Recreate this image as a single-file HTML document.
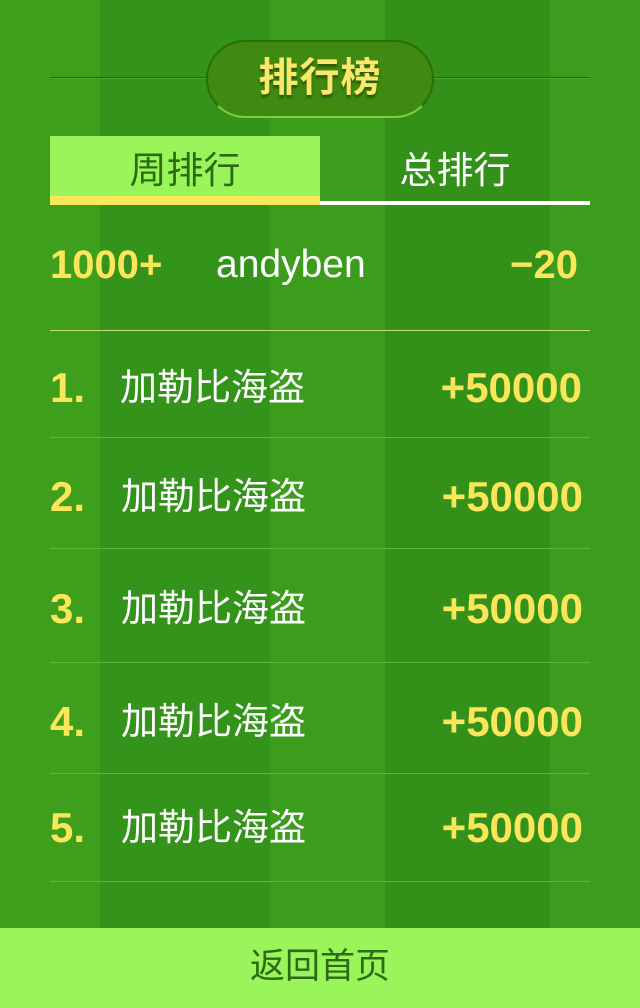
<!DOCTYPE html>
<html><head><meta charset="utf-8"><style>
*{margin:0;padding:0;box-sizing:border-box}
body{width:640px;height:1008px;position:relative;overflow:hidden;font-family:"Liberation Sans","Noto Sans CJK SC",sans-serif;
background:linear-gradient(90deg,#3d9f1c 0,#3d9f1c 100px,#34931a 100px,#34931a 270px,#3c9d1d 270px,#3c9d1d 385px,#33911a 385px,#33911a 550px,#3c9c1d 550px,#3c9c1d 640px);}
.abs{position:absolute}
.hl{top:77px;height:2px;background:#1e6a0c;border-bottom:1px solid #4faa2a}
.pill{left:206px;top:40px;width:228px;height:78px;border-radius:39px;background:#3f8a10;border:2px solid #2c6d0a;border-bottom-color:#7fcf3a;text-align:center;line-height:72px;font-size:40px;font-weight:bold;color:#fbe86a;text-shadow:0 3px 2px #285a08;letter-spacing:1px}
.tab{top:136px;height:64px;width:270px;text-align:center;font-size:37px;line-height:70px}
.r{height:60px;line-height:60px;white-space:nowrap}
.y{color:#fbe55a;font-weight:bold;font-size:42px}
.w{color:#fff;font-size:37px}
.div{left:50px;width:540px;height:1px;background:#5cb63a}
</style></head><body>
<div class="abs hl" style="left:50px;width:160px"></div>
<div class="abs hl" style="left:430px;width:160px"></div>
<div class="abs pill">排行榜</div>
<div class="abs tab" style="left:50px;background:#99f55a;color:#2c6a14">周排行</div>
<div class="abs" style="left:50px;top:196px;width:270px;height:9px;background:#fae85a"></div>
<div class="abs tab" style="left:320px;color:#fff">总排行</div>
<div class="abs" style="left:320px;top:201px;width:270px;height:4px;background:#fff"></div>

<div class="abs r y" style="left:50px;top:235px;font-size:40px">1000+</div>
<div class="abs r w" style="left:216px;top:235px;font-size:39px">andyben</div>
<div class="abs r y" style="right:62px;top:235px;font-size:40px">−20</div>
<div class="abs div" style="top:330px;background:#c8e070"></div>

<div class="abs r y" style="left:50px;top:358px">1.</div><div class="abs r w" style="left:120px;top:358px">加勒比海盗</div><div class="abs r y" style="right:58px;top:358px">+50000</div>
<div class="abs div" style="top:437px"></div>
<div class="abs r y" style="left:50px;top:467px">2.</div><div class="abs r w" style="left:121px;top:467px">加勒比海盗</div><div class="abs r y" style="right:57px;top:467px">+50000</div>
<div class="abs div" style="top:548px"></div>
<div class="abs r y" style="left:50px;top:579px">3.</div><div class="abs r w" style="left:121px;top:579px">加勒比海盗</div><div class="abs r y" style="right:57px;top:579px">+50000</div>
<div class="abs div" style="top:662px"></div>
<div class="abs r y" style="left:50px;top:692px">4.</div><div class="abs r w" style="left:121px;top:692px">加勒比海盗</div><div class="abs r y" style="right:57px;top:692px">+50000</div>
<div class="abs div" style="top:773px"></div>
<div class="abs r y" style="left:50px;top:798px">5.</div><div class="abs r w" style="left:121px;top:798px">加勒比海盗</div><div class="abs r y" style="right:57px;top:798px">+50000</div>
<div class="abs div" style="top:881px"></div>

<div class="abs" style="left:0;top:928px;width:640px;height:80px;background:#99f55a;color:#2c6a14;font-size:35px;text-align:center;line-height:78px">返回首页</div>
</body></html>
